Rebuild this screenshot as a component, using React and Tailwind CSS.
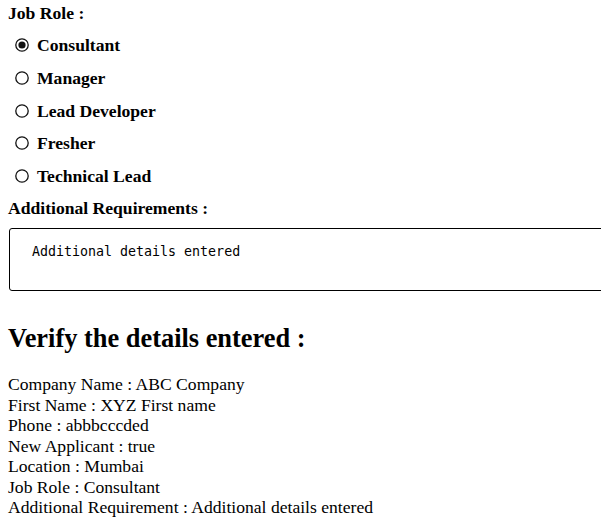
import { useState } from 'react';

const roles = ['Consultant', 'Manager', 'Lead Developer', 'Fresher', 'Technical Lead'];

function Radio({ checked }) {
  return (
    <svg width="14" height="14" viewBox="0 0 14 14" className="shrink-0">
      <circle cx="7" cy="7" r="6.2" fill="white" stroke="#111" strokeWidth="1.3" />
      {checked && <circle cx="7" cy="7" r="3.6" fill="#111" />}
    </svg>
  );
}

export default function App() {
  const [role, setRole] = useState('Consultant');
  const details = [
    ['Company Name', 'ABC Company'],
    ['First Name', 'XYZ First name'],
    ['Phone', 'abbbcccded'],
    ['New Applicant', 'true'],
    ['Location', 'Mumbai'],
    ['Job Role', role],
    ['Additional Requirement', 'Additional details entered'],
  ];

  return (
    <div className="w-[601px] h-[521px] overflow-hidden bg-white text-black font-['Liberation_Serif','Times_New_Roman',serif]">
      <div className="pl-2">
        {/* Job role */}
        <div className="pt-[3px] pb-[11px] text-[17.6px] leading-[21px] font-bold">Job Role :</div>
        <div className="flex flex-col gap-[11.75px]">
          {roles.map((r) => (
            <label
              key={r}
              onClick={() => setRole(r)}
              className="flex items-end h-[21px] text-[17.6px] leading-[21px] font-bold cursor-pointer"
            >
              <span className="ml-[7px] mr-[8px] mb-[4px]">
                <Radio checked={role === r} />
              </span>
              {r}
            </label>
          ))}
        </div>

        {/* Additional requirements */}
        <div className="mt-[11px] text-[17.6px] leading-[21px] font-bold">Additional Requirements :</div>
        <textarea
          readOnly
          defaultValue="Additional details entered"
          className="mt-[9px] ml-px block w-[640px] h-[63px] resize-none border border-black rounded-[3px] pl-[22px] pt-[15px] text-[13.3px] leading-[16px] font-['DejaVu_Sans_Mono',monospace] outline-none"
        />

        {/* Summary */}
        <h2 className="mt-[32px] text-[26.4px] leading-[30px] font-bold">Verify the details entered :</h2>
        <div className="mt-[21px] text-[17.6px] leading-[20.5px]">
          {details.map(([k, v]) => (
            <div key={k}>
              {k} : {v}
            </div>
          ))}
        </div>
      </div>
    </div>
  );
}
